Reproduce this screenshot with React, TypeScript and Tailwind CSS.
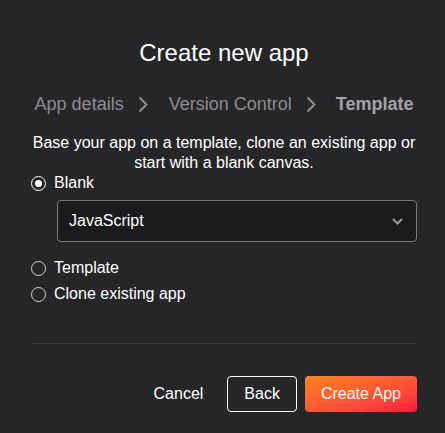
import { useState } from "react";

function Chevron() {
  return (
    <svg width="10" height="17" viewBox="0 0 10 17" fill="none" className="shrink-0">
      <path d="M1.5 1.5 L8.5 8.5 L1.5 15.5" stroke="#8d8d91" strokeWidth="2" />
    </svg>
  );
}

function Radio({ checked, label, onClick }: { checked: boolean; label: string; onClick: () => void }) {
  return (
    <button onClick={onClick} className="flex items-center h-5 text-left">
      <span
        className={
          "w-[15px] h-[15px] rounded-full border flex items-center justify-center shrink-0 " +
          (checked ? "border-white border-[1.5px]" : "border-[#d4d4d6]")
        }
      >
        {checked && <span className="w-[7px] h-[7px] rounded-full bg-white" />}
      </span>
      <span className="ml-[8px] text-white text-base leading-5">{label}</span>
    </button>
  );
}

export default function App() {
  const [choice, setChoice] = useState("blank");

  return (
    <main
      className="w-[445px] h-[433px] bg-[#262628] text-white overflow-hidden"
      style={{ fontFamily: '"Liberation Sans", Arial, sans-serif' }}
    >
      <div className="pt-[37px] pl-[31px] pr-[28px]">
        {/* Title */}
        <h1 className="text-2xl leading-8 text-center text-white">Create new app</h1>

        {/* Steps */}
        <div className="mt-[21px] flex items-center justify-center text-lg leading-7 text-[#8d8d91]">
          <span>App details</span>
          <span className="ml-[14px] mr-[21px] flex">
            <Chevron />
          </span>
          <span>Version Control</span>
          <span className="ml-[14px] mr-[20px] flex">
            <Chevron />
          </span>
          <span className="font-bold text-[#a3a3a7]">Template</span>
        </div>

        <p className="mt-[15px] text-base leading-5 text-center text-white">
          Base your app on a template, clone an existing app or start with a blank canvas.
        </p>

        {/* Options */}
        <div className="flex flex-col">
          <Radio checked={choice === "blank"} label="Blank" onClick={() => setChoice("blank")} />
          <div className="ml-[26px] mt-[7px] h-[42px] rounded-[4px] border border-[#79797d] bg-[#1b1b1d] flex items-center justify-between pl-[11px] pr-[13px]">
            <span className="text-base text-white">JavaScript</span>
            <svg width="11" height="7" viewBox="0 0 11 7" fill="none">
              <path d="M1 1 L5.5 5.5 L10 1" stroke="#9c9ca0" strokeWidth="2" />
            </svg>
          </div>
          <div className="mt-[16px] flex flex-col gap-[6px]">
            <Radio checked={choice === "template"} label="Template" onClick={() => setChoice("template")} />
            <Radio checked={choice === "clone"} label="Clone existing app" onClick={() => setChoice("clone")} />
          </div>
        </div>

        <div className="mt-[39px] h-px bg-[#3c3c3f]" />

        {/* Actions */}
        <div className="mt-[32px] flex justify-end gap-2">
          <button className="h-9 px-4 text-base text-white">Cancel</button>
          <button className="h-9 px-4 text-base text-white border border-white rounded-[4px]">Back</button>
          <button className="h-9 px-4 text-base text-white rounded-[4px] bg-gradient-to-br from-[#ff801c] to-[#ff0840]">
            Create App
          </button>
        </div>
      </div>
    </main>
  );
}
